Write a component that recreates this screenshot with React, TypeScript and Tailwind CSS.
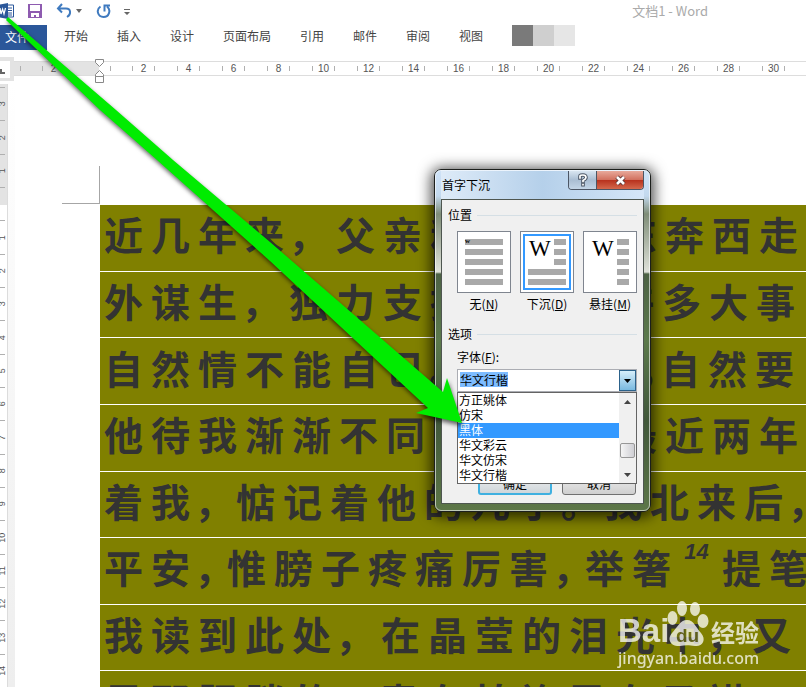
import React from "react";

const tabs = ["开始", "插入", "设计", "页面布局", "引用", "邮件", "审阅", "视图"];

const rulerNumbers = [2, 4, 6, 8, 10, 12, 14, 16, 18, 20, 22, 24, 26, 28, 30];
const sideNumbers = ["3", "2", "1", "", "1", "2", "3", "4", "5", "6", "7", "8", "9", "10", "11", "12", "13", "14"];

type Line = { text: string; mark: string };

// mark is the width class of the punctuation, which justification tightens per line
const lines: Line[] = [
  { text: "近几年来，父亲和我都是东奔西走", mark: "w-[44px]" },
  { text: "外谋生，独力支持，做了许多大事", mark: "w-[44px]" },
  { text: "自然情不能自已。情郁于中，自然要", mark: "w-[20px]" },
  { text: "他待我渐渐不同往日。但最近两年", mark: "w-[44px]" },
  { text: "着我，惦记着他的儿子。我北来后，", mark: "w-[38px]" },
  { text: "平安，惟膀子疼痛厉害，举箸^提笔", mark: "w-[29px]" },
  { text: "我读到此处，在晶莹的泪光中，又", mark: "w-[42px]" },
  { text: "见那肥胖的、青布棉袍黑布马褂", mark: "w-[40px]" },
];

const fonts = ["方正姚体", "仿宋", "黑体", "华文彩云", "华文仿宋", "华文行楷"];

function QuickAccess() {
  return (
    <div className="flex h-[25px] items-center pb-[4px]">
      <svg className="h-[16px] w-[15px]" viewBox="0 0 15 16">
        <path d="M7 2h6.500v12H7z" fill="#fff" stroke="#2b579a" />
        <path d="M8 5h4M8 7.500h4M8 10h4M8 12h4" stroke="#2b579a" />
        <path d="M0 1.500L8 0v16l-8-1.500z" fill="#2b579a" />
        <path d="M0 5l1 6 1.600-5L4 11l1.500-6" fill="none" stroke="#fff" strokeWidth="1.200" />
      </svg>
      <button aria-label="保存" className="ml-[12px]">
        <svg className="h-[16px] w-[16px]" viewBox="0 0 16 16">
          <path d="M1 1h14v14H1z" fill="#8e5bb0" />
          <path d="M3 2h10v6H3zM4 10h8v4H9v-2H7v2H4z" fill="#fff" />
        </svg>
      </button>
      <button aria-label="撤消" className="ml-[13px]">
        <svg className="h-[16px] w-[16px]" viewBox="0 0 16 16" fill="none" stroke="#3f7abf" strokeWidth="2">
          <path d="M6 1L2 5.500 6 9.500M2.500 5.500H10c5 0 5.500 6 1 8.500" />
        </svg>
      </button>
      <svg className="ml-[4px] h-[4px] w-[6px]" viewBox="0 0 6 4"><path d="M0 0h6L3 4z" fill="#666" /></svg>
      <button aria-label="恢复" className="ml-[14px]">
        <svg className="h-[16px] w-[16px]" viewBox="0 0 16 16" fill="none" stroke="#3f7abf" strokeWidth="2">
          <path d="M4.500 3.500C-.5 7 2 14 7.500 14S15.500 7 11 3.500M8.500 8.500V2.500H14" />
        </svg>
      </button>
      <svg className="ml-[12px] mt-[4px] h-[7px] w-[6px]" viewBox="0 0 6 7"><path d="M0 0h6v1H0zM0 3h6L3 6z" fill="#666" /></svg>
      <h1 className="ml-auto mr-[98px] text-[13px] text-[#aaaaaa]">文档1 - Word</h1>
    </div>
  );
}

function Tabs() {
  return (
    <nav className="flex h-[25px] items-center text-[12px] text-[#444444]">
      <button className="h-full w-[47px] bg-[#2b579a] pb-[2px] pl-[5px] text-left text-white">文件</button>
      <div className="ml-[17px] flex gap-[29px] pb-[3px]">
        {tabs.map((t) => (
          <button key={t} className="whitespace-nowrap">{t}</button>
        ))}
      </div>
      <div className="mb-[5px] ml-[29px] flex h-[21px]">
        <span className="w-[21px] bg-[#7a7a7a]" />
        <span className="w-[21px] bg-[#cfcfcf]" />
        <span className="w-[21px] bg-[#e6e6e6]" />
      </div>
    </nav>
  );
}

function RulerCell({ n }: { n: number | string }) {
  return (
    <div className="flex w-[45px] shrink-0 justify-center">
      <div className="flex h-[5px] w-[23px] items-center justify-center border-x border-[#b0b0b0]">{n}</div>
    </div>
  );
}

function TopRuler() {
  return (
    <div className="mt-[7px] flex h-[27px]">
      <div className="flex h-[24px] w-[14px] shrink-0 items-center bg-[#e3e3e3]">
        <div className="flex h-[17px] w-[10px] items-center bg-white">
          <span className="mt-[4px] h-[5px] w-[5px] border-b-2 border-l-2 border-[#666666]" />
        </div>
      </div>
      <div className="relative mt-[4px] flex h-[15px] min-w-0 flex-1 border-y border-[#dddddd] font-['Liberation_Sans',sans-serif] text-[10px] text-[#555555]">
        <div className="flex w-[85px] shrink-0 items-center bg-[#e3e3e3]">
          <span className="ml-[6px] h-[5px] w-px bg-[#b0b0b0]" />
          <div className="ml-[10px]"><RulerCell n={2} /></div>
        </div>
        <div className="flex min-w-0 flex-1 items-center overflow-hidden">
          <span className="ml-[11px] h-[5px] w-px shrink-0 bg-[#b0b0b0]" />
          <span className="w-[10px] shrink-0" />
          {rulerNumbers.map((n) => <RulerCell key={n} n={n} />)}
        </div>
        <svg className="absolute -top-[3px] left-[81px] h-[25px] w-[9px]" viewBox="0 0 9 25" fill="#fff" stroke="#888">
          <path d="M.5.5h8v3l-4 4-4-4zM4.500 11.500l4 4v2h-8v-2zM.5 17.500h8v6h-8z" />
        </svg>
      </div>
    </div>
  );
}

function SideRuler() {
  return (
    <div className="flex shrink-0">
      <div className="w-[8px] border-r border-[#dcdcdc] bg-[linear-gradient(#e3e3e3_121px,#ffffff_121px)] pt-[3px]">
        <div className="grid h-[600px] auto-rows-fr font-['Liberation_Sans',sans-serif] text-[9px] text-[#555555]">
          {sideNumbers.map((n, i) => (
            <div key={i} className="flex w-[5px] items-center justify-center border-t border-[#b0b0b0]">
              <span className="-rotate-90">{n}</span>
            </div>
          ))}
        </div>
      </div>
      <div className="w-[7px] bg-linear-to-b from-white to-[#eeeeee]" />
    </div>
  );
}

function BodyLine({ line }: { line: Line }) {
  return (
    <p className="flex items-center overflow-hidden border-b border-white bg-[#808000] pb-[8px]">
      {[...line.text].map((c, i) =>
        c === "^" ? (
          <sup key={i} className="w-[43px] shrink-0 pb-[8px] text-center font-['Liberation_Sans',sans-serif] text-[22px] italic">14</sup>
        ) : "，。、".includes(c) ? (
          <span key={i} className={"shrink-0 " + line.mark}>{c}</span>
        ) : (
          <span key={i} className="w-[47px] shrink-0 text-center">{c}</span>
        )
      )}
    </p>
  );
}

function Document() {
  return (
    <main className="min-w-0 flex-1 pl-[85px] pt-[82px]">
      <div className="-ml-[38px] h-[38px] w-[38px] border-b border-r border-[#a6a6a6]" />
      <div className="mt-px grid h-[533px] auto-rows-fr text-[39px] font-bold leading-none text-[#333333]">
        {lines.map((l) => <BodyLine key={l.text} line={l} />)}
      </div>
    </main>
  );
}

function Section({ title }: { title: string }) {
  return (
    <div className="flex h-[16px] items-center gap-[5px]">
      <h3>{title}</h3>
      <span className="h-px flex-1 bg-[#d5dfe5]" />
    </div>
  );
}

function Bars({ kind }: { kind: "none" | "drop" | "hang" }) {
  return (
    <svg className="h-[60px] w-[52px]" viewBox="0 0 52 60">
      {kind === "drop" && <rect x="3" y="3" width="46" height="54" fill="none" stroke="#3399ff" strokeWidth="2" />}
      {[7, 17, 27, 37, 47].map((y, i) => {
        const short = kind === "hang" || (kind === "drop" && i < 3);
        return <rect key={y} x={short ? 33 : 7} y={y} width={short ? 12 : 38} height="6" fill="#a9a9a9" />;
      })}
      {kind === "none" ? (
        <text x="7" y="11" fontSize="7" fontWeight="bold" fontFamily="Liberation Serif">w</text>
      ) : (
        <text x="8" y="24" fontSize="23" fontFamily="Liberation Serif">W</text>
      )}
    </svg>
  );
}

function Choice({ kind, label, accessKey }: { kind: "none" | "drop" | "hang"; label: string; accessKey: string }) {
  return (
    <label className="flex w-[54px] flex-col items-center gap-[3px]">
      <input type="radio" name="position" className="sr-only" defaultChecked={kind === "drop"} />
      <span className="border border-[#7f858f] bg-white"><Bars kind={kind} /></span>
      <span className="h-[16px] whitespace-nowrap leading-[16px]">{label}(<u>{accessKey}</u>)</span>
    </label>
  );
}

function FontList() {
  return (
    <div className="absolute inset-x-0 top-full flex h-[92px] border border-[#646464] bg-white">
      <ul role="listbox" aria-label="字体列表" className="flex-1">
        {fonts.map((f) => (
          <li
            key={f}
            role="option"
            aria-selected={f === "黑体"}
            className="h-[15px] pl-px leading-[14px] aria-selected:bg-[#3399ff] aria-selected:text-white"
          >
            {f}
          </li>
        ))}
      </ul>
      <div className="flex w-[17px] flex-col items-center bg-[#f0f0f0]">
        <svg className="mt-[7px] h-[4px] w-[7px]" viewBox="0 0 7 4"><path d="M0 4h7L3.500 0z" fill="#444" /></svg>
        <span className="mt-[39px] h-[15px] w-[15px] rounded-[2px] border border-[#979797] bg-linear-to-r from-[#f5f5f5] to-[#cfcfd4]" />
        <svg className="mt-[15px] h-[4px] w-[7px]" viewBox="0 0 7 4"><path d="M0 0h7L3.500 4z" fill="#444" /></svg>
      </div>
    </div>
  );
}

function DropCapDialog() {
  return (
    <section
      role="dialog"
      aria-label="首字下沉"
      className="absolute left-[434px] top-[169px] w-[217px] rounded-[7px] border border-[#1c1f1c] bg-[linear-gradient(#cfe3f8_0px,#c3d9ee_26px,#7f8d77_44px,#dfe2da_102px,#4d6245_104px,#5c7a4c_170px,#41583b_250px,#5d7748_100%)] text-[12px] text-black shadow-[0_2px_14px_3px_rgba(0,0,0,0.7)]"
    >
      <div className="rounded-[6px] border border-white/60 px-[5px] pb-[6px]">
        <header className="flex h-[28px] bg-linear-to-r from-[#deebf8] via-[#b5d0ea] to-[#d5e6f8]">
          <h2 className="pl-px leading-[27px]">首字下沉</h2>
          <div className="ml-auto flex h-[19px] overflow-hidden rounded-b-[4px] border border-t-0 border-[#4c5665]">
            <button aria-label="帮助" className="flex w-[28px] items-center justify-center border-r border-[#4c5665] bg-linear-to-b from-[#d9e5f1] via-[#a9bdd2] to-[#c3d5e7]">
              <svg className="h-[14px] w-[10px]" viewBox="0 0 10 14" fill="none" strokeLinecap="square">
                <path d="M2 5V3q0-1 3-1t3 2.500Q8 6 5 7.500v1M5 11.500v.2" stroke="#4c5665" strokeWidth="3.600" />
                <path d="M2 5V3q0-1 3-1t3 2.500Q8 6 5 7.500v1M5 11.500v.2" stroke="#fff" strokeWidth="1.700" />
              </svg>
            </button>
            <button aria-label="关闭" className="flex w-[46px] items-center justify-center bg-[linear-gradient(#e8a99b,#d2715f_48%,#b7301c_50%,#d4684c)]">
              <svg className="h-[11px] w-[13px]" viewBox="0 0 13 11">
                <path d="M3 2l7 7M10 2L3 9" stroke="#5e3434" strokeWidth="4.500" />
                <path d="M3 2l7 7M10 2L3 9" stroke="#fff" strokeWidth="2.600" />
              </svg>
            </button>
          </div>
        </header>
        <form className="border border-[#4e5650] bg-[#f0f0f0] px-[6px] pb-[8px] pt-[7px]" onSubmit={(e) => e.preventDefault()}>
          <Section title="位置" />
          <div className="mt-[8px] flex justify-between pl-[9px]">
            <Choice kind="none" label="无" accessKey="N" />
            <Choice kind="drop" label="下沉" accessKey="D" />
            <Choice kind="hang" label="悬挂" accessKey="M" />
          </div>
          <div className="mt-[14px]"><Section title="选项" /></div>
          <div className="pl-[9px] pt-[7px]">
            <label htmlFor="font" className="block h-[16px] leading-[16px]">字体(<u>F</u>):</label>
            <div className="relative mt-[4px]">
              <div className="flex h-[23px] items-stretch border border-[#abadb3] bg-white">
                <div className="flex flex-1 items-center pb-[2px] pl-[2px]">
                  <input id="font" defaultValue="华文行楷" className="h-[15px] w-[48px] bg-[#7dbcff] outline-none" />
                </div>
                <button type="button" aria-label="展开" className="flex w-[17px] items-center justify-center border border-[#2c628b] bg-linear-to-b from-[#d6eefa] to-[#79b9df]">
                  <svg className="h-[4px] w-[7px]" viewBox="0 0 7 4"><path d="M0 0h7L3.500 4z" /></svg>
                </button>
              </div>
              <FontList />
            </div>
          </div>
          <div className="mt-[80px] flex justify-end gap-[10px] pr-px">
            <button className="h-[23px] w-[74px] rounded-[3px] border-2 border-[#3fb0e0] bg-linear-to-b from-[#f2f2f2] to-[#cfd6da] leading-[17px]">确定</button>
            <button type="button" className="h-[23px] w-[74px] rounded-[3px] border border-[#707070] bg-linear-to-b from-[#f2f2f2] to-[#cfcfcf] leading-[19px]">取消</button>
          </div>
        </form>
      </div>
    </section>
  );
}

function Arrow() {
  return (
    <svg className="pointer-events-none absolute left-0 top-0 h-[440px] w-[480px] drop-shadow-[1px_3px_2px_rgba(0,0,0,0.6)]" viewBox="0 0 480 440">
      <path d="M8 17L116 110 173 160 270 242 443 392 447 378 462 423 416 413 428 408 270 261 157 160 100 110 6 20z" fill="#00ec00" />
    </svg>
  );
}

function Watermark() {
  return (
    <div className="pointer-events-none absolute left-[618px] top-[600px] text-white opacity-75">
      <div className="flex h-[48px] items-end">
        <span className="w-[47px] font-['Liberation_Sans',sans-serif] text-[33px] font-bold leading-[34px]">Bai</span>
        <svg className="h-[48px] w-[44px]" viewBox="0 0 44 48">
          <g fill="#fff">
            <ellipse cx="7.500" cy="18" rx="5" ry="7" />
            <ellipse cx="17" cy="8.500" rx="5" ry="7.500" />
            <ellipse cx="30" cy="9" rx="5" ry="7" />
            <ellipse cx="38" cy="21" rx="5.500" ry="7" />
            <path d="M22 20c7 0 9 8 14 13 6 7 1 14-6 13-6-1-10-1-15 0C7 47 1 40 7 33c5-5 8-13 15-13z" />
          </g>
          <text x="11" y="42" fontSize="19" fontWeight="bold" fontFamily="Liberation Sans" fill="#6d6d18">du</text>
        </svg>
        <span className="ml-[2px] pb-[3px] text-[24px] font-bold leading-[26px]">经验</span>
      </div>
      <div className="font-['Noto_Sans',sans-serif] text-[16px] font-medium leading-[20px]">jingyan.baidu.com</div>
    </div>
  );
}

export default function App() {
  return (
    <div className="relative flex h-screen flex-col overflow-hidden bg-white font-['Noto_Sans_CJK_SC',sans-serif]">
      <QuickAccess />
      <Tabs />
      <TopRuler />
      <div className="flex min-h-0 flex-1">
        <SideRuler />
        <Document />
      </div>
      <DropCapDialog />
      <Arrow />
      <Watermark />
    </div>
  );
}
